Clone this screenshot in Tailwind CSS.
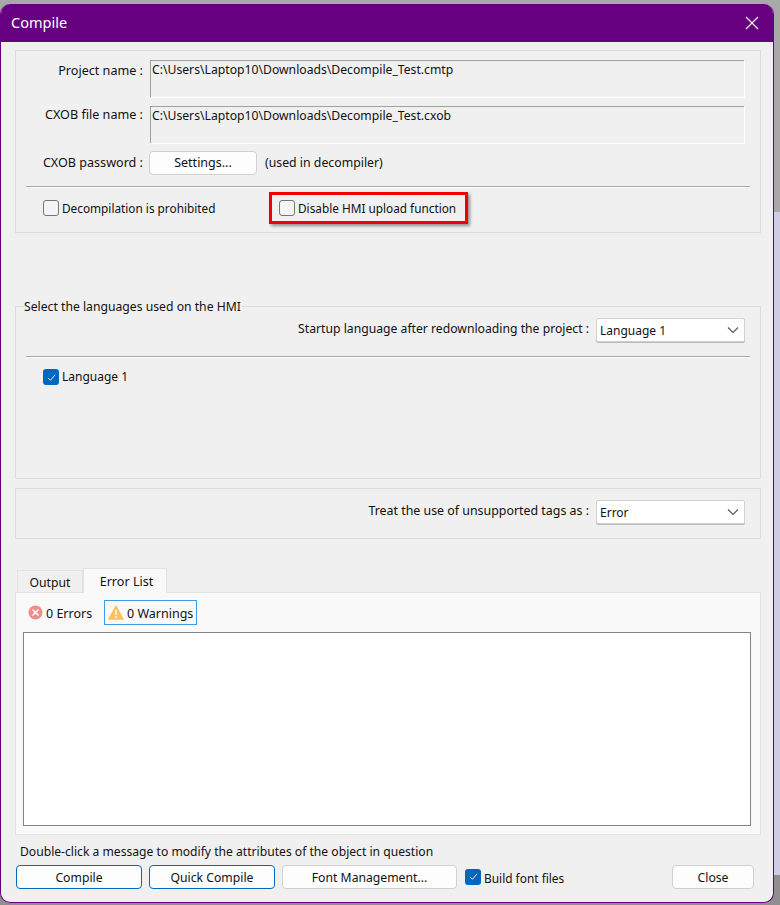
<!DOCTYPE html>
<html lang="en">

<head>
    <meta charset="UTF-8">
    <title>Compile</title>
    <script src="https://cdn.jsdelivr.net/npm/@tailwindcss/browser@4"></script>
</head>

<body class="bg-[#a9a9a9] h-[905px] w-[780px] overflow-hidden relative font-['Noto_Sans','Open_Sans',sans-serif] text-[12.2px] text-[#111]">
    <!-- backdrop on the right of the dialog -->
    <div class="absolute left-[772px] top-[212px] w-[8px] h-[663px] bg-[#cfcde2]"></div>
    <div class="absolute left-[772px] top-[875px] w-[8px] h-[30px] bg-[#8f8f8f]"></div>
    <div class="absolute left-0 top-[895px] w-[780px] h-[10px] bg-[#8f8f8f]"></div>

    <!-- dialog -->
    <div class="absolute left-0 top-[4px] w-[774px] h-[899px] rounded-[10px] bg-[#f0f0f0] border-x border-b border-[#660080] overflow-hidden flex flex-col">
        <!-- title bar -->
        <div class="h-[38px] shrink-0 -mx-px bg-[#660080] flex items-center justify-between pl-[11px] pr-[15px] text-white text-[14.5px]">
            <span>Compile</span>
            <svg class="w-[14px] h-[14px]" viewBox="0 0 14 14" fill="none" stroke="#fff" stroke-width="1.1">
                <path d="M1 1l12 12M13 1L1 13"></path>
            </svg>
        </div>

        <div class="flex-1 pl-[14px] pr-[12px] pt-[8px] flex flex-col">
            <!-- project panel -->
            <section class="h-[183px] border border-[#dcdcdc] px-[10px] pt-[9px]">
                <div class="flex items-start h-[46px]">
                    <span class="w-[117px] text-right leading-[22px] text-[12.6px]">Project name :</span>
                    <div class="ml-[7px] w-[594px] h-[37px] border-t border-l border-[#a0a0a0] shadow-[1px_1px_0_#fff] pl-px leading-[16px] pt-px">C:\Users\Laptop10\Downloads\Decompile_Test.cmtp</div>
                </div>
                <div class="flex items-start h-[44px]">
                    <span class="w-[117px] text-right leading-[18px] text-[12.6px]">CXOB file name :</span>
                    <div class="ml-[7px] w-[594px] h-[37px] border-t border-l border-[#a0a0a0] shadow-[1px_1px_0_#fff] pl-px leading-[16px] pt-px">C:\Users\Laptop10\Downloads\Decompile_Test.cxob</div>
                </div>
                <div class="flex items-center h-[26px]">
                    <span class="w-[117px] text-right text-[12.6px]">CXOB password :</span>
                    <button class="ml-[6px] w-[108px] h-[24px] bg-[#fdfdfd] border border-[#d0d0d0] rounded-[4px] text-[12.5px] pt-px">Settings...</button>
                    <span class="ml-[8px] text-[12.3px]">(used in decompiler)</span>
                </div>
                <div class="mt-[10px] border-t border-[#a8a8a8] shadow-[0_1px_0_#fff]"></div>
                <div class="flex items-center h-[42px] text-[11.8px]">
                    <label class="flex items-center gap-[3px] ml-[17px] w-[226px]">
                        <span class="w-[16px] h-[16px] rounded-[3px] border border-[#767676] bg-[#f5f5f5]"></span>
                        <span class="pt-[2px]">Decompilation is prohibited</span>
                    </label>
                    <!-- highlight box -->
                    <div class="h-[32px] w-[199px] border-[3px] border-[#f00000] flex items-center gap-[3px] pl-[7px] shadow-[2px_2px_3px_rgba(0,0,0,0.4)]">
                        <span class="w-[16px] h-[16px] rounded-[3px] border border-[#767676] bg-[#f5f5f5]"></span>
                        <span class="pt-[2px]">Disable HMI upload function</span>
                    </div>
                </div>
            </section>

            <!-- languages panel -->
            <section class="mt-[73px] h-[173px] border border-[#dcdcdc] relative px-[10px]">
                <span class="absolute left-[8px] -top-[9px] bg-[#f0f0f0] pr-px leading-[18px]">Select the languages used on the HMI</span>
                <div class="flex items-center justify-end h-[35px] pt-[11px] pr-[5px]">
                    <span class="-mt-[2px] text-[12.2px]">Startup language after redownloading the project :</span>
                    <div class="ml-[7px] w-[149px] h-[24px] bg-white border border-[#d0d0d0] shadow-[0_1px_0_#bbb] rounded-[2px] flex items-center justify-between pl-[3px] pr-[5px] text-[12px]">
                        <span class="pt-[2px]">Language 1</span>
                        <svg class="w-[12px] h-[8px]" viewBox="0 0 12 8" fill="none" stroke="#555" stroke-width="1.1"><path d="M1 1.5l5 5 5-5"></path></svg>
                    </div>
                </div>
                <div class="mt-[14px] border-t border-[#a8a8a8] shadow-[0_1px_0_#fff]"></div>
                <label class="flex items-center gap-[3px] ml-[17px] mt-[11px] text-[12px]">
                    <span class="w-[16px] h-[16px] rounded-[3px] bg-[#0067c0] flex items-center justify-center">
                        <svg class="w-[9px] h-[9px]" viewBox="0 0 10 10" fill="none" stroke="#fff" stroke-width="1"><path d="M1 5.5l2.8 2.6L9 2"></path></svg>
                    </span>
                    Language 1
                </label>
            </section>

            <!-- unsupported tags -->
            <section class="mt-[9px] h-[51px] border border-[#dcdcdc] flex items-start justify-end pt-[11px] pr-[15px]">
                <div class="flex items-center">
                    <span class="-mt-[2px] text-[12.4px]">Treat the use of unsupported tags as :</span>
                    <div class="ml-[7px] w-[149px] h-[24px] bg-white border border-[#d0d0d0] shadow-[0_1px_0_#bbb] rounded-[2px] flex items-center justify-between pl-[3px] pr-[5px] text-[12px]">
                        <span class="pt-[2px]">Error</span>
                        <svg class="w-[12px] h-[8px]" viewBox="0 0 12 8" fill="none" stroke="#555" stroke-width="1.1"><path d="M1 1.5l5 5 5-5"></path></svg>
                    </div>
                </div>
            </section>

            <!-- output tabs -->
            <div class="mt-[29px] flex items-end h-[24px] pl-[2px] relative z-10">
                <div class="w-[66px] h-[22px] bg-[#f0f0f0] border border-b-0 border-[#e3e3e3] flex items-center justify-center pt-[3px]">Output</div>
                <div class="w-[84px] h-[25px] bg-[#f9f9f9] border border-b-0 border-[#e3e3e3] flex items-center justify-center pt-[2px] pl-[3px] -mb-px text-[12.6px]">Error List</div>
            </div>
            <div class="h-[243px] bg-[#f9f9f9] border border-[#e3e3e3] pl-[7px] pr-[9px] pt-[7px] flex flex-col text-[12.5px]">
                <div class="flex items-center h-[25px] pl-[5px]">
                    <svg class="w-[15px] h-[15px]" viewBox="0 0 15 15"><circle cx="7.5" cy="7.5" r="7" fill="#f28b8b"></circle><path d="M4.5 4.5l6 6M10.5 4.5l-6 6" stroke="#fff" stroke-width="1.6"></path></svg>
                    <span class="ml-[3px] w-[47px] whitespace-nowrap pt-[3px]">0 Errors</span>
                    <div class="ml-[11px] w-[93px] h-[25px] border border-[#3f9bea] flex items-center pl-[3px] gap-[3px] whitespace-nowrap">
                        <svg class="w-[16px] h-[15px] shrink-0" viewBox="0 0 16 15"><path d="M8 .8L15.4 14.2H.6z" fill="#fcc15c" stroke="#fcc15c" stroke-linejoin="round"></path><path d="M8 5v5M8 11.2v1.6" stroke="#fff" stroke-width="1.5"></path></svg>
                        <span class="pt-[3px]">0 Warnings</span>
                    </div>
                </div>
                <div class="mt-[7px] h-[194px] bg-white border border-[#83838f]"></div>
            </div>

            <p class="mt-[8px] ml-[5px] leading-[18px] text-[12.14px]">Double-click a message to modify the attributes of the object in question</p>

            <!-- bottom buttons -->
            <div class="mt-[4px] flex items-center">
                <button class="ml-[1px] w-[126px] h-[24px] bg-[#fdfdfd] border border-[#0067c0] rounded-[4px] pt-[2px]">Compile</button>
                <button class="ml-[7px] w-[126px] h-[24px] bg-[#fdfdfd] border border-[#0067c0] rounded-[4px] pt-[2px]">Quick Compile</button>
                <button class="ml-[7px] w-[175px] h-[24px] bg-[#fdfdfd] border border-[#d0d0d0] rounded-[4px] pt-[2px]">Font Management...</button>
                <label class="ml-[8px] flex items-center gap-[3px] text-[11.9px]">
                    <span class="w-[16px] h-[16px] rounded-[3px] bg-[#0067c0] flex items-center justify-center">
                        <svg class="w-[9px] h-[9px]" viewBox="0 0 10 10" fill="none" stroke="#fff" stroke-width="1"><path d="M1 5.5l2.8 2.6L9 2"></path></svg>
                    </span>
                    <span class="pt-[4px]">Build font files</span>
                </label>
                <button class="ml-auto mr-[7px] w-[82px] h-[24px] bg-[#fdfdfd] border border-[#d0d0d0] rounded-[4px] pt-[2px]">Close</button>
            </div>
        </div>
    </div>
</body>

</html>
